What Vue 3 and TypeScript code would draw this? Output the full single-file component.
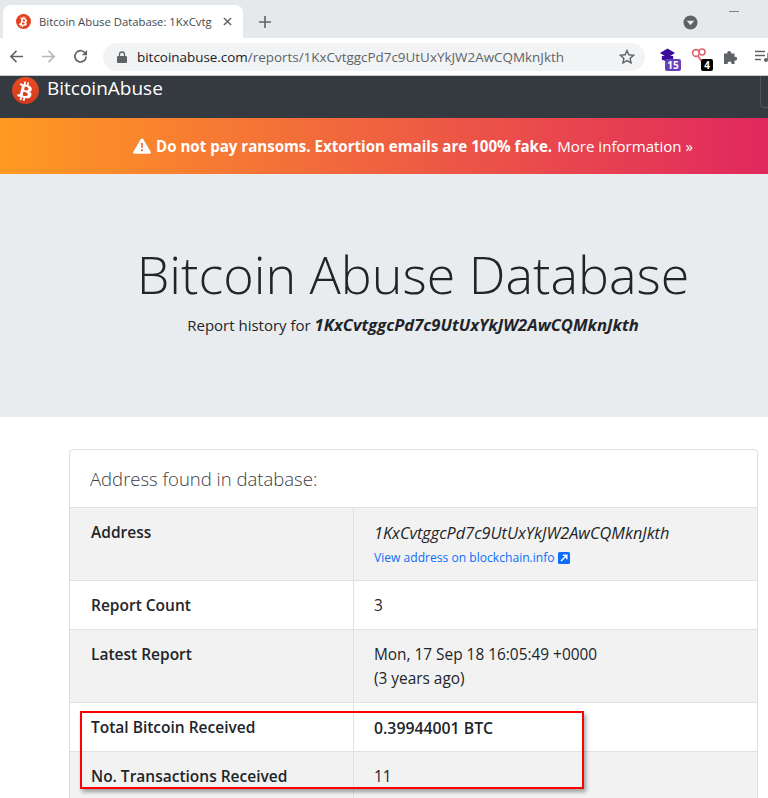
<script setup lang="ts">
interface Row { label: string; lines: string[]; strong?: boolean }
const plainRows: Row[] = [
  { label: 'Report Count', lines: ['3'] },
  { label: 'Latest Report', lines: ['Mon, 17 Sep 18 16:05:49 +0000', '(3 years ago)'] },
  { label: 'Total Bitcoin Received', lines: ['0.39944001 BTC'], strong: true },
  { label: 'No. Transactions Received', lines: ['11'] },
]
const btcPath = 'M15.3 10.6c.2-1.4-.9-2.1-2.3-2.6l.5-1.9-1.2-.3-.4 1.8-.9-.2.4-1.8-1.2-.3-.4 1.9-.8-.2-1.6-.4-.3 1.2s.9.2.8.2c.5.1.6.4.6.7l-1.3 5.2c-.1.1-.2.3-.6.2 0 0-.8-.2-.8-.2l-.6 1.4 1.5.4.8.2-.5 1.9 1.2.3.5-1.9.9.2-.5 1.9 1.2.3.5-1.9c2 .4 3.5.2 4.1-1.6.5-1.4 0-2.2-1-2.8.7-.2 1.3-.7 1.5-1.7zm-2.700 3.800c-.4 1.400-2.800.7-3.600.5l.6-2.600c.8.2 3.300.6 3 2.100zm.4-3.800c-.3 1.300-2.300.6-3 .5l.6-2.300c.6.1 2.700.4 2.400 1.800z'
</script>

<template>
  <div class="page">
    <div class="tabstrip">
      <div class="tab">
        <svg class="fav" viewBox="0 0 24 24"><circle cx="12" cy="12" r="12" fill="#e2411f"/><g transform="translate(12 12) scale(1.3) translate(-11 -11.5)"><path :d="btcPath" fill="#fff"/></g></svg>
        <span class="tab-title">Bitcoin Abuse Database: 1KxCvtg</span>
        <svg class="tab-x" viewBox="0 0 10 10"><path d="M1 1l8 8M9 1l-8 8" stroke="#5f6368" stroke-width="1.6"/></svg>
      </div>
      <svg class="new-tab" viewBox="0 0 12 12"><path d="M6 0v12M0 6h12" stroke="#5f6368" stroke-width="1.6"/></svg>
      <div class="spacer"></div>
      <svg class="profile" viewBox="0 0 16 16"><circle cx="8" cy="8" r="7.500" fill="#5f6368"/><path d="M4 6h8l-4 5z" fill="#e6e9ec"/></svg>
      <div class="minimize"></div>
    </div>

    <div class="toolbar">
      <svg class="nav-icon" viewBox="0 0 16 16"><path d="M15 8H2M8 2L2 8l6 6" fill="none" stroke="#5f6368" stroke-width="1.7"/></svg>
      <svg class="nav-icon" viewBox="0 0 16 16"><path d="M1 8h13M8 2l6 6-6 6" fill="none" stroke="#b4b7bb" stroke-width="1.7"/></svg>
      <svg class="nav-icon" viewBox="0 0 16 16"><path d="M13.400 5.200A6 6 0 1 0 14 8" fill="none" stroke="#5f6368" stroke-width="1.800"/><path d="M15 1v5.600H9.400z" fill="#5f6368"/></svg>
      <div class="omnibox">
        <svg class="lock" viewBox="0 0 10 12"><path d="M2.500 5V3.500a2.500 2.500 0 0 1 5 0V5" fill="none" stroke="#5f6368" stroke-width="1.300"/><rect y="5" width="10" height="7" rx="1" fill="#5f6368"/></svg>
        <span class="url"><span class="host">bitcoinabuse.com</span>/reports/1KxCvtggcPd7c9UtUxYkJW2AwCQMknJkth</span>
        <svg class="star" viewBox="0 0 16 16"><path d="M8 1.600l1.900 4.200 4.600.5-3.400 3.100 1 4.500L8 11.600l-4.100 2.300 1-4.500L1.500 6.300l4.600-.5z" fill="none" stroke="#5f6368" stroke-width="1.400"/></svg>
      </div>
      <div class="ext ext-cap">
        <svg viewBox="0 0 18 14" class="cap"><path d="M9 0l8 5-8 5-8-5z" fill="#3d0e9e"/><path d="M3 8h12v4l-6 2-6-2z" fill="#3d0e9e"/></svg>
        <span class="badge purple">15</span>
      </div>
      <div class="ext ext-ribbon">
        <svg viewBox="0 0 16 14" class="ribbon"><circle cx="5" cy="5" r="3.400" fill="none" stroke="#d9656b" stroke-width="1.600"/><circle cx="11" cy="4" r="3" fill="none" stroke="#d9656b" stroke-width="1.600"/><path d="M7 8l4 6" stroke="#d9656b" stroke-width="1.600"/></svg>
        <span class="badge black">4</span>
      </div>
      <svg class="puzzle" viewBox="0 0 16 16"><path d="M1 4.500h3.300a2 2 0 1 1 3.800 0h3.400v3.300a2 2 0 1 1 0 3.800V15h-3a2 2 0 1 0-3.800 0H1z" fill="#5f6368"/></svg>
      <svg class="queue" viewBox="0 0 14 12"><path d="M0 1.500h10M0 5.500h10M0 9.500h6" stroke="#5f6368" stroke-width="1.400"/><path d="M13 3v7" stroke="#5f6368" stroke-width="1.400"/><circle cx="11" cy="10" r="2" fill="#5f6368"/></svg>
    </div>

    <nav class="navbar">
      <div class="brand">
        <svg class="logo" viewBox="0 0 24 24"><defs><linearGradient id="lg" x1="0" y1="0" x2="0" y2="1"><stop offset="0" stop-color="#ea4c1f"/><stop offset="1" stop-color="#cf3a1e"/></linearGradient></defs><circle cx="12" cy="12" r="12" fill="url(#lg)"/><g transform="translate(12 12) scale(1.3) translate(-11 -11.5)"><path :d="btcPath" fill="#fff"/></g></svg>
        <span class="brand-name">BitcoinAbuse</span>
      </div>
      <div class="toggler"></div>
    </nav>

    <div class="banner">
      <svg class="warn" viewBox="0 0 18 16"><path d="M9 .5c.6 0 1 .3 1.300.8l7.300 12.500c.5.9-.1 1.900-1.100 1.900H1.500c-1 0-1.600-1-1.100-1.900L7.700 1.300C8 .8 8.400.5 9 .5z" fill="#fff"/><path d="M8 5h2l-.3 5H8.300zM9 11a1.100 1.100 0 1 1 0 2.300A1.100 1.100 0 0 1 9 11z" fill="#f1703f"/></svg>
      <strong>Do not pay ransoms. Extortion emails are 100% fake.</strong>
      <span class="more">More information »</span>
    </div>

    <header class="jumbotron">
      <h1>Bitcoin Abuse Database</h1>
      <p>Report history for <strong><em>1KxCvtggcPd7c9UtUxYkJW2AwCQMknJkth</em></strong></p>
    </header>

    <section class="content">
      <div class="card">
        <div class="card-header">Address found in database:</div>
        <div class="row striped first">
          <div class="cell th">Address</div>
          <div class="cell td">
            <em class="addr">1KxCvtggcPd7c9UtUxYkJW2AwCQMknJkth</em>
            <div class="chain">
              <span>View address on blockchain.info</span>
              <svg class="ext-link" viewBox="0 0 12 12"><rect width="12" height="12" rx="1.500" fill="#0d6efd"/><path d="M3 9l5-5M4.800 3.200h4v4" fill="none" stroke="#fff" stroke-width="1.500"/></svg>
            </div>
          </div>
        </div>
        <div v-for="(r, i) in plainRows" :key="r.label" class="row" :class="{ striped: i % 2 === 1 }">
          <div class="cell th">{{ r.label }}</div>
          <div class="cell td" :class="{ bold: r.strong }">
            <div v-for="l in r.lines" :key="l">{{ l }}</div>
          </div>
        </div>
      </div>
      <div class="highlight"></div>
    </section>
  </div>
</template>

<style>
html, body { margin: 0; height: 798px; overflow: hidden; background: #fff; }
</style>

<style scoped>
.page { width: 768px; height: 798px; overflow: hidden; font-family: "Open Sans", "Noto Sans", sans-serif; color: #212529; font-size: 15.4px; position: relative; }
.tabstrip { height: 38px; background: #e6e9ec; display: flex; align-items: flex-end; box-sizing: border-box; position: relative; }
.tab { width: 240px; height: 33px; margin-left: 3px; background: #fff; border-radius: 8px 8px 0 0; display: flex; align-items: center; padding-left: 13px; box-sizing: border-box; }
.fav { width: 15px; height: 15px; flex: none; }
.tab-title { margin-left: 8px; font-size: 11.3px; color: #45494e; width: 174px; white-space: nowrap; overflow: hidden; flex: none; }
.tab-x { width: 9px; height: 9px; margin-left: 10px; flex: none; }
.new-tab { width: 12px; height: 12px; margin: 0 0 10px 16px; flex: none; }
.spacer { flex: 1; }
.profile { width: 15px; height: 15px; flex: none; position: absolute; left: 683px; top: 15px; }
.minimize { position: absolute; left: 729px; top: 11px; width: 10px; height: 1px; background: #7b7e82; }
.toolbar { height: 38px; background: #fff; border-bottom: 1px solid #c9ccd0; box-sizing: border-box; display: flex; align-items: center; padding-left: 9px; position: relative; }
.nav-icon { width: 15px; height: 15px; margin-right: 17px; flex: none; }
.omnibox { position: absolute; left: 103px; top: 5px; width: 542px; height: 28px; background: #f1f3f4; border-radius: 14px; display: flex; align-items: center; padding-left: 14px; box-sizing: border-box; }
.lock { width: 10px; height: 12px; flex: none; }
.url { margin-left: 10px; font-size: 13.43px; color: #5f6368; white-space: nowrap; flex: none; }
.host { color: #202124; }
.star { width: 16px; height: 16px; position: absolute; left: 516px; top: 6px; }
.ext { position: absolute; top: 5px; }
.ext-cap { left: 658px; width: 24px; height: 28px; }
.cap { position: absolute; left: 1px; top: 5px; width: 17px; height: 14px; }
.ext-ribbon { left: 690px; width: 24px; height: 28px; }
.ribbon { position: absolute; left: 1px; top: 5px; width: 16px; height: 14px; }
.badge { position: absolute; font-size: 10px; font-weight: 700; color: #fff; text-align: center; line-height: 12px; border-radius: 2px; font-family: "Noto Sans", sans-serif; }
.purple { background: #6741b8; left: 7px; top: 16px; width: 16px; height: 12px; }
.black { background: #000; left: 11px; top: 16px; width: 12px; height: 12px; }
.puzzle { position: absolute; left: 723px; top: 11px; width: 16px; height: 16px; }
.queue { position: absolute; left: 755px; top: 12px; width: 14px; height: 12px; }
.navbar { height: 42px; background: #343a40; display: flex; align-items: flex-start; position: relative; overflow: hidden; }
.brand { display: flex; align-items: flex-start; margin: 1px 0 0 12px; color: #fff; font-size: 19px; }
.brand-name { line-height: 22px; }
.logo { width: 27px; height: 27px; margin-right: 8px; flex: none; }
.toggler { position: absolute; left: 760px; top: -10px; width: 20px; height: 40px; border: 1px solid #4f555b; border-radius: 4px; }
.banner { height: 56px; background: linear-gradient(90deg, #ff9a22, #e0285e); display: flex; align-items: center; justify-content: center; color: #fff; font-size: 15.1px; padding-left: 58px; box-sizing: border-box; white-space: nowrap; }
.warn { width: 18px; height: 16px; margin-right: 5px; flex: none; }
.more { margin-left: 5px; }
.jumbotron { height: 243px; background: #e9ecef; box-sizing: border-box; padding-top: 66px; text-align: center; padding-left: 58px; }
.jumbotron h1 { margin: 0; font-size: 52px; font-weight: 300; line-height: 67px; }
.jumbotron p { margin: 7px 0 0; font-size: 15px; line-height: 22px; }
.jumbotron p strong { font-size: 16.6px; }
.content { padding: 32px 10px 0 69px; position: relative; }
.card { border: 1px solid #dfdfdf; border-radius: 4px; }
.card-header { height: 58px; line-height: 57px; padding-left: 20px; font-size: 18.5px; font-weight: 300; color: #3b4045; border-bottom: 1px solid #dfdfdf; box-sizing: border-box; }
.row { display: flex; border-bottom: 1px solid #dee2e6; }
.striped { background: #f2f2f2; }
.cell { padding: 13px 20px 11px; line-height: 24px; box-sizing: border-box; }
.th { width: 284px; flex: none; font-weight: 600; font-size: 15.5px; border-right: 1px solid #dee2e6; padding: 12px 20px 12px 21px; }
.td { flex: 1; }
.bold { font-weight: 600; font-size: 15.8px; }
.addr { font-size: 16.3px; display: block; }
.chain { font-size: 12.1px; line-height: 24px; color: #0d6efd; display: flex; align-items: center; margin-top: 1px; margin-bottom: -1px; }
.ext-link { width: 12px; height: 12px; margin-left: 3px; }
.highlight { position: absolute; left: 80px; top: 294px; width: 504px; height: 78px; border: 2px solid #f00; box-sizing: border-box; box-shadow: 2px 3px 4px rgba(0,0,0,.35); pointer-events: none; }
</style>
